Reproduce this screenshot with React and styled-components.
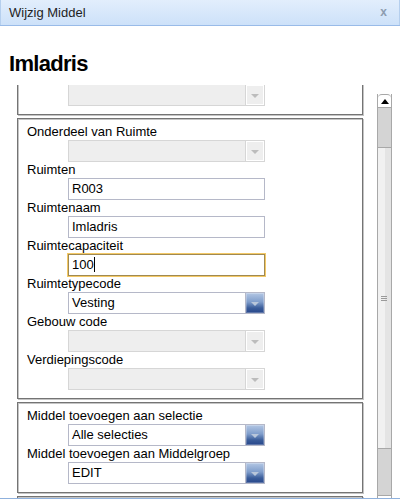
import React, { useLayoutEffect, useRef } from 'react'
import styled, { createGlobalStyle } from 'styled-components'

const GlobalStyle = createGlobalStyle`
  html, body {
    margin: 0;
    padding: 0;
    background: #fff;
  }
  body {
    font-family: "Liberation Sans", Arial, sans-serif;
    font-size: 13px;
    color: #000;
  }
`

// window chrome
const Window = styled.div`
  width: 400px;
  height: 501px;
  display: flex;
  flex-direction: column;
  overflow: hidden;
  background: #fff;
`

const TitleBar = styled.div`
  height: 25px;
  flex: none;
  display: flex;
  align-items: center;
  justify-content: space-between;
  padding: 0 13px 0 9px;
  background: linear-gradient(#e2eefc, #cde1f9);
  border-bottom: 1px solid #99bbe8;
  box-shadow: inset 1px 0 0 #b5cfee, inset -1px 0 0 #b5cfee;
`

const Title = styled.span`
  font-size: 13px;
  color: #1e1e1e;
`

const Close = styled.span`
  font-size: 12px;
  font-weight: bold;
  color: #8d9cb0;
  line-height: 1;
  margin-top: -2px;
`

const Heading = styled.h1`
  flex: none;
  height: 59px;
  box-sizing: border-box;
  margin: 0;
  padding: 25px 0 0 9px;
  font-size: 22px;
  line-height: 25px;
  letter-spacing: -0.7px;
  font-weight: bold;
  color: #000;
`

const Body = styled.div`
  flex: 1;
  display: flex;
  overflow: hidden;
  min-height: 0;
`

const Viewport = styled.div`
  flex: 1;
  overflow-y: scroll;
  scrollbar-width: none;
  &::-webkit-scrollbar {
    display: none;
  }
`

const Content = styled.div`
  padding: 0 0 40px 17px;
`

// form sections
const Section = styled.fieldset`
  width: 346px;
  box-sizing: border-box;
  margin: 0 0 3px;
  padding: 5px 0 8px;
  min-width: 0;
  border: 1px solid #747474;
  box-shadow: inset 1px 1px 0 #c4c4c4, 1px 1px 0 #c4c4c4;
`

const Row = styled.div`
  display: flex;
  flex-direction: column;
`

const Label = styled.label`
  display: block;
  height: 16px;
  line-height: 16px;
  padding-left: 9px;
  white-space: nowrap;
`

const Field = styled.div`
  margin-left: 50px;
  width: 197px;
  height: 22px;
  box-sizing: border-box;
  display: flex;
  background: ${(p) => (p.$disabled ? '#eeeeee' : '#fff')};
  border: 1px solid ${(p) => (p.$focused ? '#a08a52' : p.$disabled ? '#d6d6d6' : '#b5b8c8')};
  box-shadow: ${(p) => (p.$focused ? '0 0 0 1px #f4c966' : 'none')};
`

const Value = styled.div`
  flex: 1;
  padding: 0 3px;
  line-height: 20px;
  white-space: nowrap;
  overflow: hidden;
`

const Caret = styled.span`
  display: inline-block;
  width: 1px;
  height: 15px;
  background: #000;
  vertical-align: -3px;
`

const Trigger = styled.div`
  width: 19px;
  flex: none;
  box-sizing: border-box;
  display: flex;
  align-items: center;
  justify-content: center;
  border-left: 1px solid ${(p) => (p.$disabled ? '#d6d6d6' : '#b5b8c8')};
  background: ${(p) =>
    p.$disabled
      ? '#eeeeee'
      : 'linear-gradient(#b3c7e4 0%, #7f9dcb 45%, #3a5d9a 75%, #27468a 100%)'};
  box-shadow: inset 0 0 0 1px ${(p) => (p.$disabled ? '#fff' : 'rgba(255,255,255,0.25)')};
`

const Arrow = styled.span`
  width: 0;
  height: 0;
  margin-top: 1px;
  border-left: 4px solid transparent;
  border-right: 4px solid transparent;
  border-top: 4px solid ${(p) => (p.$disabled ? '#bcbcbc' : '#b8c6da')};
`

// scrollbar drawn beside the form
const Scrollbar = styled.div`
  flex: none;
  width: 15px;
  height: 415px;
  margin: 9px 8px 0 0;
  box-sizing: border-box;
  display: flex;
  flex-direction: column;
  border-left: 1px solid #a8a8a8;
  border-right: 1px solid #a8a8a8;
`

const ScrollButton = styled.div`
  height: 14px;
  flex: none;
  display: flex;
  align-items: center;
  justify-content: center;
  background: #fff;
  border-top: 1px solid #a8a8a8;
  border-bottom: 1px solid #a8a8a8;
  border-radius: ${(p) => (p.$up ? '4px 4px 0 0' : '0')};
  box-sizing: border-box;
`

const UpArrow = styled.span`
  width: 0;
  height: 0;
  border-left: 4px solid transparent;
  border-right: 4px solid transparent;
  border-bottom: 5px solid #000;
`

const Track = styled.div`
  flex: 1;
  display: flex;
  flex-direction: column;
  background: #d4d4d4;
`

const Thumb = styled.div`
  flex: none;
  margin-top: ${(p) => p.$top}px;
  height: ${(p) => p.$size}px;
  box-sizing: border-box;
  display: flex;
  align-items: center;
  justify-content: center;
  border-top: 1px solid #a8a8a8;
  border-bottom: 1px solid #a8a8a8;
  background: linear-gradient(90deg, #f1f1f1 55%, #e4e4e4 55%);
`

const Grip = styled.span`
  width: 6px;
  height: 5px;
  margin-left: -1px;
  background: repeating-linear-gradient(#9a9a9a 0 1px, transparent 1px 2px);
`

const Footer = styled.div`
  height: 2px;
  flex: none;
  border-top: 1px solid #8fb1dd;
`

const TextField = ({ value, focused, disabled }) => (
  <Field $focused={focused} $disabled={disabled}>
    <Value>
      {value}
      {focused && <Caret />}
    </Value>
  </Field>
)

const ComboField = ({ value, disabled }) => (
  <Field $disabled={disabled}>
    <Value>{value}</Value>
    <Trigger $disabled={disabled}>
      <Arrow $disabled={disabled} />
    </Trigger>
  </Field>
)

const locatie = [{ id: 'loc', type: 'combo', disabled: true }]

const ruimte = [
  { label: 'Onderdeel van Ruimte', type: 'combo', disabled: true },
  { label: 'Ruimten', value: 'R003' },
  { label: 'Ruimtenaam', value: 'Imladris' },
  { label: 'Ruimtecapaciteit', value: '100', focused: true },
  { label: 'Ruimtetypecode', type: 'combo', value: 'Vesting' },
  { label: 'Gebouw code', type: 'combo', disabled: true },
  { label: 'Verdiepingscode', type: 'combo', disabled: true },
]

const selectie = [
  { label: 'Middel toevoegen aan selectie', type: 'combo', value: 'Alle selecties' },
  { label: 'Middel toevoegen aan Middelgroep', type: 'combo', value: 'EDIT' },
]

const extra = [
  { id: 'x1', type: 'combo' },
  { id: 'x2', type: 'combo' },
]

const FormSection = ({ rows }) => (
  <Section>
    {rows.map((r) => (
      <Row key={r.label || r.id}>
        <Label>{r.label}</Label>
        {r.type === 'combo' ? (
          <ComboField value={r.value} disabled={r.disabled} />
        ) : (
          <TextField value={r.value} focused={r.focused} disabled={r.disabled} />
        )}
      </Row>
    ))}
  </Section>
)

const App = () => {
  const viewRef = useRef(null)

  // form is scrolled a little down
  useLayoutEffect(() => {
    if (viewRef.current) viewRef.current.scrollTop = 23
  }, [])

  return (
    <>
      <GlobalStyle />
      <Window>
        <TitleBar>
          <Title>Wijzig Middel</Title>
          <Close>x</Close>
        </TitleBar>
        <Heading>Imladris</Heading>
        <Body>
          <Viewport ref={viewRef}>
            <Content>
              <FormSection rows={locatie} />
              <FormSection rows={ruimte} />
              <FormSection rows={selectie} />
              <FormSection rows={extra} />
            </Content>
          </Viewport>
          <Scrollbar>
            <ScrollButton $up>
              <UpArrow />
            </ScrollButton>
            <Track>
              <Thumb $top={39} $size={302}>
                <Grip />
              </Thumb>
            </Track>
            <ScrollButton />
          </Scrollbar>
        </Body>
        <Footer />
      </Window>
    </>
  )
}

export default App
